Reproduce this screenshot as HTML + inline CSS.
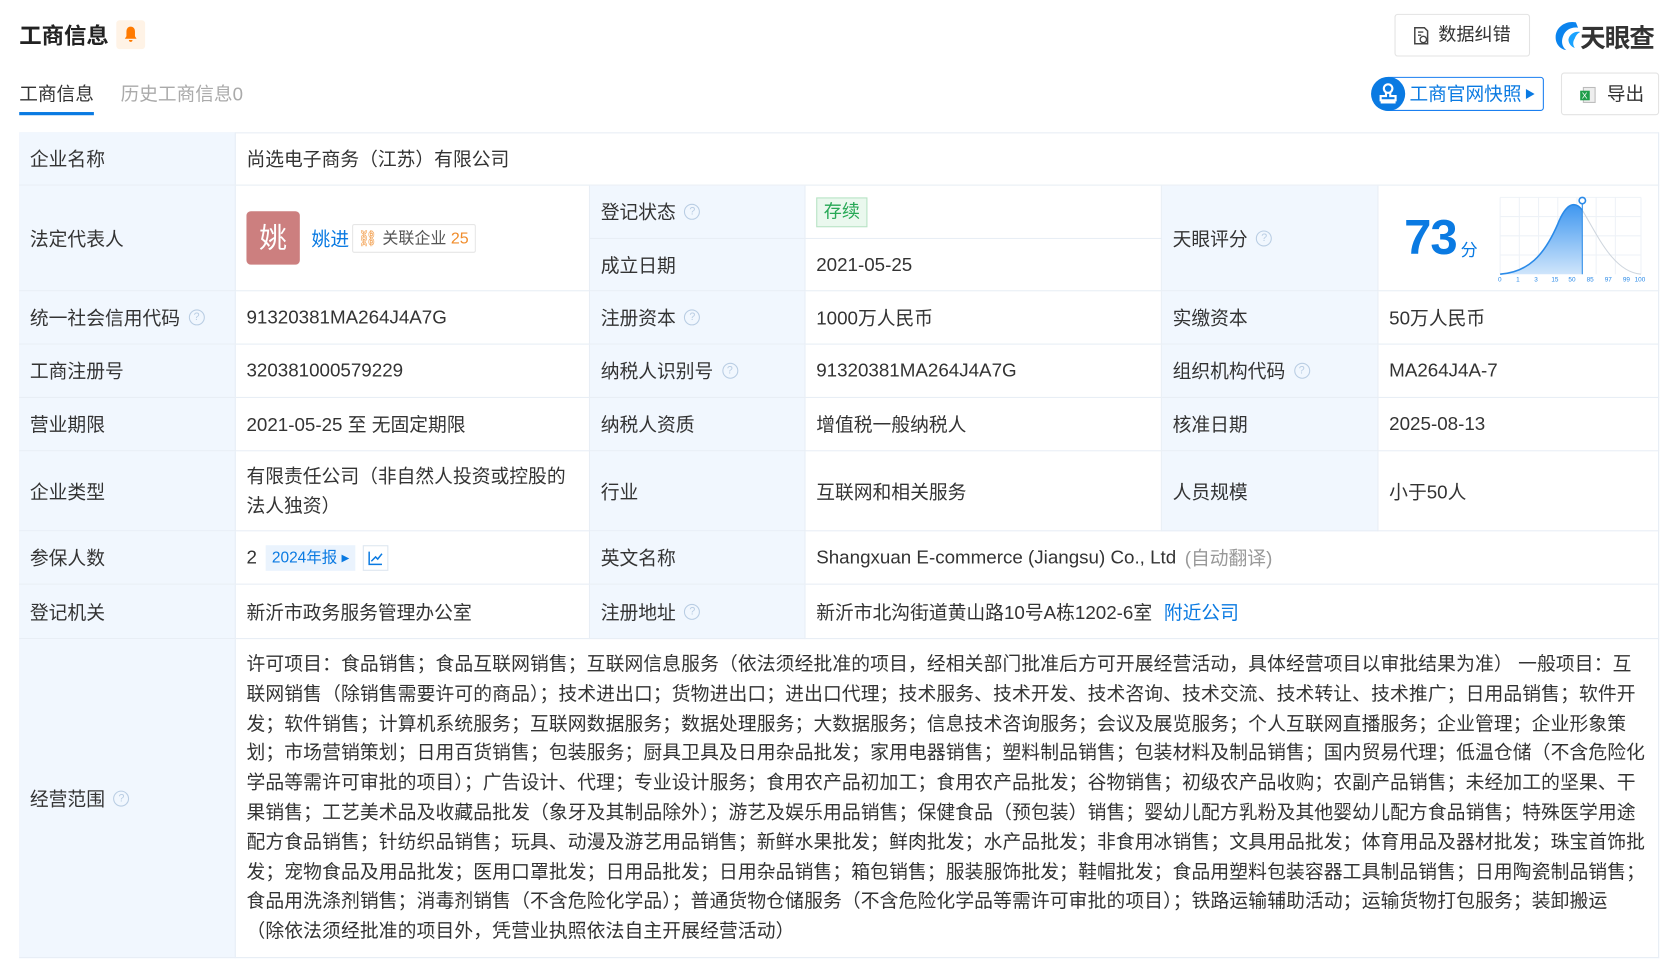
<!DOCTYPE html>
<html><head><meta charset="utf-8">
<style>
html,body{margin:0;padding:0;background:#fff;overflow:hidden}
body{width:1673px;height:972px}
#w{position:absolute;left:0;top:0;width:1568px;height:911px;transform:scale(1.06696);transform-origin:0 0;font-family:"Liberation Sans","Noto Sans CJK SC",sans-serif;color:#333}
.a{position:absolute;white-space:nowrap}
.t{position:absolute;left:18px;top:124px;width:1537px;height:774px;border:1px solid #e8eef5;box-sizing:border-box}
.c{position:absolute;box-sizing:border-box;border-right:1px solid #e8eef5;border-bottom:1px solid #e8eef5;font-size:17.6px;display:flex;align-items:center;padding-left:10px;white-space:nowrap}
.l{background:#f1f7fe}
.q{display:inline-block;width:13px;height:13px;border:1.3px solid #b9cde3;border-radius:50%;color:#b9cde3;font-size:10px;line-height:13px;text-align:center;margin-left:8px;font-family:"Liberation Sans",sans-serif}
.scope{font-size:17.6px;line-height:27.8px;white-space:nowrap;letter-spacing:0.12px}
</style></head><body><div id="w">
<div class="a" style="left:18px;top:18px;font-size:21px;font-weight:bold;color:#222">工商信息</div>
<div class="a" style="left:109px;top:19px;width:27px;height:27px;background:#fff3e6;border-radius:3px">
<svg width="27" height="27" viewBox="0 0 27 27"><path d="M13.5 6c-2.6 0-4 2-4 4.5v4.5l-1.5 2.3h11l-1.5-2.3v-4.5C17.5 8 16.1 6 13.5 6z M11.8 18.5a1.7 1.7 0 003.4 0z" fill="#ff7a00"/></svg></div>
<div class="a" style="left:1307px;top:13px;width:127px;height:40px;border:1px solid #e3e3e3;border-radius:3px;box-sizing:border-box;font-size:17px;line-height:38px;padding-left:40px">数据纠错
<svg style="position:absolute;left:16px;top:11px" width="16" height="18" viewBox="0 0 16 18"><path d="M2 1h9l3 3v12H2z" fill="none" stroke="#444" stroke-width="1.4"/><circle cx="10" cy="12" r="3" fill="none" stroke="#444" stroke-width="1.3"/><path d="M5 5h5M5 8h3" stroke="#444" stroke-width="1.3"/></svg></div>
<div class="a" style="left:1455px;top:16px;height:36px">
<svg width="28" height="30" viewBox="0 0 28 30" style="position:absolute;left:0;top:2px"><path d="M22 3C13 1 3 7 3 17c0 6 4 11 10 12-4-3-5-8-3-13 2-6 8-9 14-8z" fill="#0b84ee"/><path d="M26 12c-5-1-10 2-11 7 0 4 3 7 6 8-2-3-2-6 0-9 1-3 3-5 5-6z" fill="#1aa3ff"/></svg>
<span style="position:absolute;left:26px;top:0;font-size:24px;font-weight:bold;color:#333;white-space:nowrap;letter-spacing:-1px">天眼查</span></div>
<div class="a" style="left:18px;top:75px;font-size:17.5px;color:#333">工商信息</div>
<div class="a" style="left:18px;top:105px;width:70px;height:3px;background:#0a7ae2"></div>
<div class="a" style="left:113px;top:75px;font-size:17.5px;color:#aaa">历史工商信息0</div>
<div class="a" style="left:1286px;top:72px;width:161px;height:32px;border:1px solid #1a7ff0;border-radius:16px 3px 3px 16px;box-sizing:border-box;color:#0a7ae2;font-size:17.5px;line-height:30px;padding-left:34px">工商官网快照<span style="font-size:10px;vertical-align:2px;margin-left:3px">▶</span></div>
<div class="a" style="left:1285px;top:72px;width:32px;height:32px;border-radius:50%;background:#0a7ae2">
<svg width="32" height="32" viewBox="0 0 32 32"><circle cx="16" cy="11" r="4" fill="none" stroke="#fff" stroke-width="2"/><path d="M14 15v3H9v4h14v-4h-5v-3M9 24h14" fill="none" stroke="#fff" stroke-width="2"/></svg></div>
<div class="a" style="left:1463px;top:68px;width:92px;height:40px;border:1px solid #e3e3e3;border-radius:3px;box-sizing:border-box;font-size:17.5px;line-height:38px;padding-left:42px">导出
<svg style="position:absolute;left:16px;top:12px" width="16" height="16" viewBox="0 0 16 16"><rect x="4" y="1" width="11" height="14" fill="#eee" stroke="#bbb"/><rect x="1" y="4" width="9" height="9" fill="#1e9e4a"/><text x="2.5" y="11.5" font-size="8" fill="#fff" font-family="Liberation Sans">X</text></svg></div>

<div class="t"></div>
<div class="c l" style="left:18px;top:124px;width:203px;height:50px">企业名称</div>
<div class="c" style="left:221px;top:124px;width:1334px;height:50px">尚选电子商务（江苏）有限公司</div>
<div class="c l" style="left:18px;top:174px;width:203px;height:99px">法定代表人</div>
<div class="c" style="left:221px;top:174px;width:332px;height:99px">
<span style="display:inline-block;width:50px;height:50px;background:#cc7f7f;border-radius:4px;color:#fff;font-size:26px;text-align:center;line-height:50px">姚</span>
<span style="color:#0a7ae2;margin-left:11px">姚进</span>
<span style="display:inline-block;border:1px solid #e6e6e6;border-radius:2px;font-size:15px;padding:0 6px 0 4px;margin-left:3px;line-height:25px;color:#555"><span style="color:#f08c2b">⛓</span> 关联企业 <span style="color:#f08c2b">25</span></span></div>
<div class="c l" style="left:553px;top:174px;width:202px;height:50px">登记状态<span class="q">?</span></div>
<div class="c" style="left:755px;top:174px;width:334px;height:50px"><span style="background:#eaf8ee;border:1px solid #b7e3c4;color:#26a855;padding:0 6px;line-height:26px;font-size:17px">存续</span></div>
<div class="c l" style="left:553px;top:224px;width:202px;height:49px">成立日期</div>
<div class="c" style="left:755px;top:224px;width:334px;height:49px">2021-05-25</div>
<div class="c l" style="left:1089px;top:174px;width:203px;height:99px">天眼评分<span class="q">?</span></div>
<div class="c" style="left:1292px;top:174px;width:263px;height:99px"></div>
<div class="a" style="left:1316px;top:195px;font-size:46px;font-weight:bold;color:#0a7ae2;font-family:'Liberation Sans',sans-serif;letter-spacing:-1px">73</div>
<div class="a" style="left:1369px;top:221px;font-size:16px;color:#0a7ae2">分</div>
<svg class="a" style="left:1402px;top:180px" width="142" height="88" viewBox="0 0 142 88">
<defs><linearGradient id="g" x1="0" y1="0" x2="0" y2="1"><stop offset="0" stop-color="#3f97f0"/><stop offset="1" stop-color="#cfe5fb"/></linearGradient></defs>
<g stroke="#eef2f7" stroke-width="1"><path d="M4 5V77M22 5V77M40 5V77M58 5V77M76 5V77M94 5V77M112 5V77M136 5V77M4 5H136M4 23H136M4 41H136M4 59H136"/></g>
<path d="M4 77C30 75 45 60 58 30C66 10 74 8 81 17V77z" fill="url(#g)"/>
<path d="M4 77C30 75 45 60 58 30C66 10 74 8 81 17C95 40 110 75 136 77" fill="none" stroke="#cfd6de" stroke-width="1"/>
<path d="M4 77C30 75 45 60 58 30C66 10 74 8 81 17" fill="none" stroke="#2a8ae8" stroke-width="1.5"/>
<path d="M81 10V77" stroke="#2a8ae8" stroke-width="1"/>
<circle cx="81" cy="8" r="3" fill="#fff" stroke="#2a8ae8" stroke-width="1.5"/>
<g font-size="6" fill="#2a8ae8" font-family="Liberation Sans"><text x="2" y="84">0</text><text x="19" y="84">1</text><text x="36" y="84">3</text><text x="52" y="84">15</text><text x="68" y="84">50</text><text x="85" y="84">85</text><text x="102" y="84">97</text><text x="119" y="84">99</text><text x="130" y="84">100</text></g>
</svg>
<div class="c l" style="left:18px;top:273px;width:203px;height:50px">统一社会信用代码<span class="q">?</span></div>
<div class="c" style="left:221px;top:273px;width:332px;height:50px">91320381MA264J4A7G</div>
<div class="c l" style="left:553px;top:273px;width:202px;height:50px">注册资本<span class="q">?</span></div>
<div class="c" style="left:755px;top:273px;width:334px;height:50px">1000万人民币</div>
<div class="c l" style="left:1089px;top:273px;width:203px;height:50px">实缴资本</div>
<div class="c" style="left:1292px;top:273px;width:263px;height:50px">50万人民币</div>
<div class="c l" style="left:18px;top:323px;width:203px;height:50px">工商注册号</div>
<div class="c" style="left:221px;top:323px;width:332px;height:50px">320381000579229</div>
<div class="c l" style="left:553px;top:323px;width:202px;height:50px">纳税人识别号<span class="q">?</span></div>
<div class="c" style="left:755px;top:323px;width:334px;height:50px">91320381MA264J4A7G</div>
<div class="c l" style="left:1089px;top:323px;width:203px;height:50px">组织机构代码<span class="q">?</span></div>
<div class="c" style="left:1292px;top:323px;width:263px;height:50px">MA264J4A-7</div>
<div class="c l" style="left:18px;top:373px;width:203px;height:50px">营业期限</div>
<div class="c" style="left:221px;top:373px;width:332px;height:50px">2021-05-25 至 无固定期限</div>
<div class="c l" style="left:553px;top:373px;width:202px;height:50px">纳税人资质</div>
<div class="c" style="left:755px;top:373px;width:334px;height:50px">增值税一般纳税人</div>
<div class="c l" style="left:1089px;top:373px;width:203px;height:50px">核准日期</div>
<div class="c" style="left:1292px;top:373px;width:263px;height:50px">2025-08-13</div>
<div class="c l" style="left:18px;top:423px;width:203px;height:75px">企业类型</div>
<div class="c" style="left:221px;top:423px;width:332px;height:75px;line-height:28px">有限责任公司（非自然人投资或控股的<br>法人独资）</div>
<div class="c l" style="left:553px;top:423px;width:202px;height:75px">行业</div>
<div class="c" style="left:755px;top:423px;width:334px;height:75px">互联网和相关服务</div>
<div class="c l" style="left:1089px;top:423px;width:203px;height:75px">人员规模</div>
<div class="c" style="left:1292px;top:423px;width:263px;height:75px">小于50人</div>
<div class="c l" style="left:18px;top:498px;width:203px;height:50px">参保人数</div>
<div class="c" style="left:221px;top:498px;width:332px;height:50px">2<span style="background:#eaf3fd;color:#0a7ae2;font-size:14.5px;padding:0 6px;margin-left:8px;line-height:24px">2024年报 ▸</span><span style="display:inline-block;width:24px;height:24px;border:1px solid #dde6f0;margin-left:7px;box-sizing:border-box"><svg width="22" height="22" viewBox="0 0 22 22"><path d="M5 5v12h12M7 14l4-4 2 2 4-5" fill="none" stroke="#0a7ae2" stroke-width="1.4"/></svg></span></div>
<div class="c l" style="left:553px;top:498px;width:202px;height:50px">英文名称</div>
<div class="c" style="left:755px;top:498px;width:800px;height:50px">Shangxuan E-commerce (Jiangsu) Co., Ltd<span style="color:#999;margin-left:8px">(自动翻译)</span></div>
<div class="c l" style="left:18px;top:548px;width:203px;height:51px">登记机关</div>
<div class="c" style="left:221px;top:548px;width:332px;height:51px">新沂市政务服务管理办公室</div>
<div class="c l" style="left:553px;top:548px;width:202px;height:51px">注册地址<span class="q">?</span></div>
<div class="c" style="left:755px;top:548px;width:800px;height:51px">新沂市北沟街道黄山路10号A栋1202-6室<span style="color:#0a7ae2;margin-left:11px">附近公司</span></div>
<div class="c l" style="left:18px;top:599px;width:203px;height:299px">经营范围<span class="q">?</span></div>
<div class="c" style="left:221px;top:599px;width:1334px;height:299px;align-items:flex-start;padding-top:10px"><div class="scope">许可项目：食品销售；食品互联网销售；互联网信息服务（依法须经批准的项目，经相关部门批准后方可开展经营活动，具体经营项目以审批结果为准） 一般项目：互<br>联网销售（除销售需要许可的商品）；技术进出口；货物进出口；进出口代理；技术服务、技术开发、技术咨询、技术交流、技术转让、技术推广；日用品销售；软件开<br>发；软件销售；计算机系统服务；互联网数据服务；数据处理服务；大数据服务；信息技术咨询服务；会议及展览服务；个人互联网直播服务；企业管理；企业形象策<br>划；市场营销策划；日用百货销售；包装服务；厨具卫具及日用杂品批发；家用电器销售；塑料制品销售；包装材料及制品销售；国内贸易代理；低温仓储（不含危险化<br>学品等需许可审批的项目）；广告设计、代理；专业设计服务；食用农产品初加工；食用农产品批发；谷物销售；初级农产品收购；农副产品销售；未经加工的坚果、干<br>果销售；工艺美术品及收藏品批发（象牙及其制品除外）；游艺及娱乐用品销售；保健食品（预包装）销售；婴幼儿配方乳粉及其他婴幼儿配方食品销售；特殊医学用途<br>配方食品销售；针纺织品销售；玩具、动漫及游艺用品销售；新鲜水果批发；鲜肉批发；水产品批发；非食用冰销售；文具用品批发；体育用品及器材批发；珠宝首饰批<br>发；宠物食品及用品批发；医用口罩批发；日用品批发；日用杂品销售；箱包销售；服装服饰批发；鞋帽批发；食品用塑料包装容器工具制品销售；日用陶瓷制品销售；<br>食品用洗涤剂销售；消毒剂销售（不含危险化学品）；普通货物仓储服务（不含危险化学品等需许可审批的项目）；铁路运输辅助活动；运输货物打包服务；装卸搬运<br>（除依法须经批准的项目外，凭营业执照依法自主开展经营活动）</div></div>
</div></body></html>
